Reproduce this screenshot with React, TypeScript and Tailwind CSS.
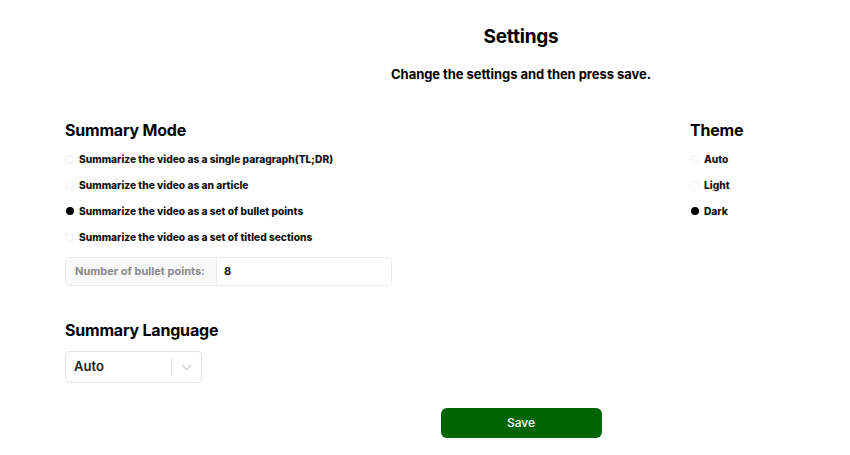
import React from "react";

function Radio({ checked, label }: { checked?: boolean; label: string }) {
  return (
    <div className="flex items-center h-[26px]">
      {checked ? (
        <span className="w-[8px] h-[8px] rounded-full bg-black ml-[1px] mr-[5px]" />
      ) : (
        <span className="w-[9px] h-[9px] rounded-full border border-[#f0f0f0] mr-[5px]" />
      )}
      <span className="text-[10.2px] font-extrabold text-[#111] leading-none">{label}</span>
    </div>
  );
}

export default function App() {
  return (
    <div className="w-[850px] h-[455px] bg-white text-black overflow-hidden" style={{ fontFamily: "Inter, 'Noto Sans', sans-serif" }}>
      <div className="pl-[192px] text-center pt-[24px]">
        <h1 className="text-[19px] font-bold leading-[26px] tracking-[-0.2px]">Settings</h1>
        <p className="text-[13px] font-bold leading-[16px] mt-[16px] tracking-[-0.05px]">Change the settings and then press save.</p>
      </div>
      <div className="flex pl-[65px] mt-[38px]">
        <div className="flex-1">
          <h2 className="text-[16px] font-bold leading-[20px] tracking-[-0.2px]">Summary Mode</h2>
          <div className="mt-[6px]">
            <Radio label="Summarize the video as a single paragraph(TL;DR)" />
            <Radio label="Summarize the video as an article" />
            <Radio checked label="Summarize the video as a set of bullet points" />
            <Radio label="Summarize the video as a set of titled sections" />
          </div>
          <div className="mt-[7px] w-[327px] h-[29px] flex border border-[#ececec] rounded-[4px] overflow-hidden">
            <div className="w-[151px] bg-[#f8f8f8] border-r border-[#ececec] flex items-center pl-[9px] text-[11px] font-bold text-[#8a8a8a]">
              Number of bullet points:
            </div>
            <div className="flex-1 flex items-center pl-[7px] text-[11px] font-bold text-[#111]">8</div>
          </div>
          <h2 className="text-[16px] font-bold leading-[20px] tracking-[-0.2px] mt-[34px]">Summary Language</h2>
          <div className="mt-[11px] w-[137px] h-[32px] border border-[#e4e4e4] rounded-[4px] flex items-center">
            <span className="flex-1 pl-[8px] text-[13px] font-semibold text-[#222]">Auto</span>
            <span className="w-px h-[18px] bg-[#e0e0e0]" />
            <span className="w-[29px] flex justify-center">
              <svg width="11" height="7" viewBox="0 0 11 7" fill="none">
                <path d="M1 1l4.5 4.5L10 1" stroke="#cfcfcf" strokeWidth="1.3" />
              </svg>
            </span>
          </div>
        </div>
        <div className="w-[160px]">
          <h2 className="text-[16px] font-bold leading-[20px] tracking-[-0.2px]">Theme</h2>
          <div className="mt-[6px]">
            <Radio label="Auto" />
            <Radio label="Light" />
            <Radio checked label="Dark" />
          </div>
        </div>
      </div>
      <div className="pl-[192px] flex justify-center mt-[25px]">
        <button className="w-[161px] h-[30px] rounded-[6px] bg-[#006400] text-white text-[12px] font-medium">Save</button>
      </div>
    </div>
  );
}
